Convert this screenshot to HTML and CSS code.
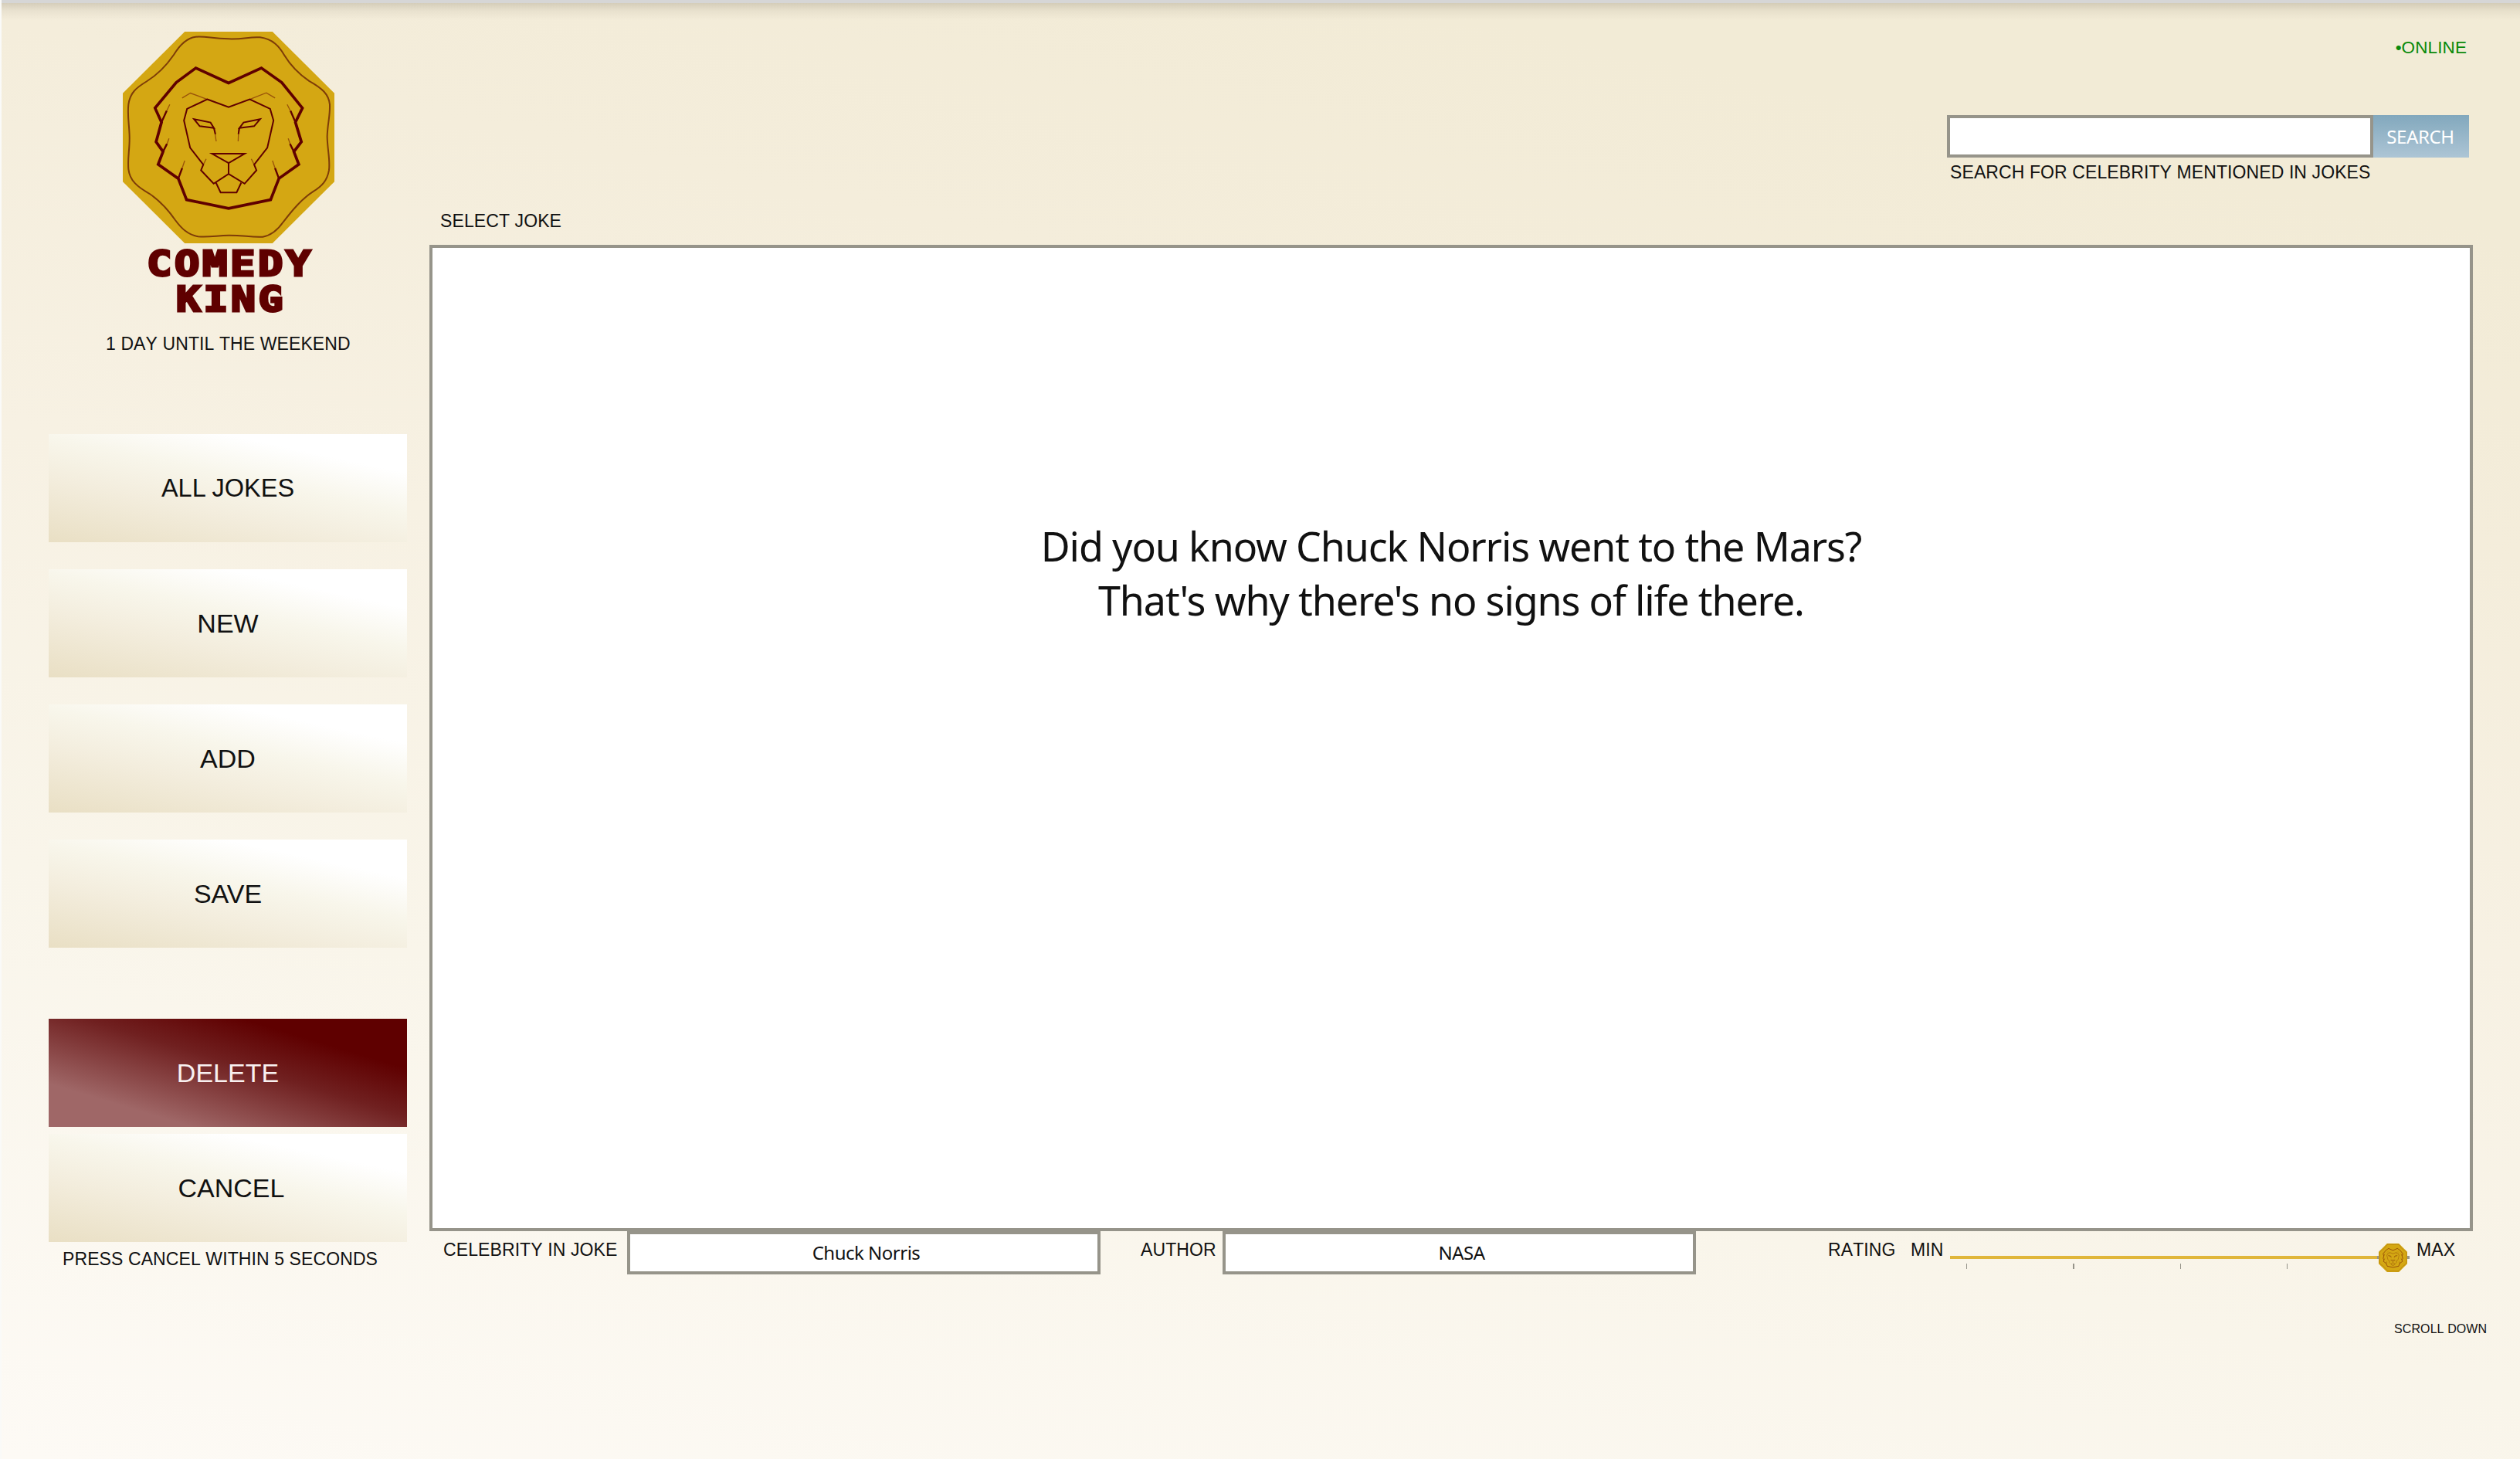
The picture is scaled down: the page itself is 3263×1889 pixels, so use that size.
FILE: index.html
```html
<!DOCTYPE html>
<html lang="en">
<head>
<meta charset="utf-8">
<title>Comedy King</title>
<link rel="stylesheet" href="styles.css">
</head>
<body>
<svg class="defs" aria-hidden="true">
  <symbol id="lion" viewBox="58 63 820 820">
    <path fill="#d4a713" d="M298 63H638L878 302V644L638 883H298L58 644V302Z"/>
    <g fill="none" stroke="#5f0000">
      <path stroke="#7d3c08" stroke-width="6" d="M468 91C530 93 545 82 590 85C640 92 664 120 684 154C712 200 745 230 780 254C830 282 856 305 860 345C862 390 851 420 850 470C851 520 862 560 857 600C850 640 830 662 795 683C750 712 715 755 680 800C658 832 635 852 600 858C550 860 530 852 470 852C420 853 400 860 350 857C310 850 285 825 262 794C235 755 205 720 160 690C115 665 85 640 80 596C76 550 85 520 84 470C83 420 75 390 80 345C86 300 110 280 150 256C195 228 230 190 256 152C280 112 305 88 340 83C385 80 400 90 468 91Z"/>
      <g stroke-width="11">
        <path d="M468 262L341 204L265 260L183 359L208 414L187 490L214 528L195 577L273 632L305 714L468 748L631 714L663 632L740 577L721 528L750 490L727 414L754 359L674 260L595 204Z"/>
      </g>
      <g stroke-width="7">
        <path d="M208 414L228 370M214 528L229 498M273 632L288 592M727 414L708 370M721 528L706 498M663 632L648 592"/>
      </g>
      <g stroke-width="4" opacity=".5">
        <path d="M226 375L240 345M228 502L237 477M287 595L298 563M710 375L695 345M708 502L699 477M649 595L638 563"/>
        <path d="M385 325L320 301L288 320M550 325L614 300L648 320M413 440L420 488M507 440L505 488M370 578L381 556M567 578L556 556"/>
      </g>
      <g stroke-width="6">
        <path d="M385 325L468 355L550 325L629 362L642 407L618 513L567 578L576 600L530 652L468 614L410 652L361 600L370 578L319 513L295 407L307 362Z"/>
        <path d="M404 536H530L468 572ZM468 572V614M419 648L437 686H499L517 648"/>
        <path d="M334 402L398 415L411 436L356 429ZM590 402L526 415L510 436L567 429Z"/>
        <path d="M411 436L417 460M510 436L506 460"/>
      </g>
    </g>
  </symbol>
</svg>
<div class="page">
  <aside class="sidebar">
    <svg class="emblem"><use href="#lion"/></svg>
    <svg class="wordmark" viewBox="0 0 216 92">
      <text x="0" y="42" textLength="216" lengthAdjust="spacingAndGlyphs">COMEDY</text>
      <text x="38" y="87.5" textLength="142" lengthAdjust="spacingAndGlyphs">KING</text>
    </svg>
    <p class="countdown">1 DAY UNTIL THE WEEKEND</p>
    <nav class="menu">
      <button class="btn btn-all">ALL JOKES</button>
      <button class="btn">NEW</button>
      <button class="btn">ADD</button>
      <button class="btn">SAVE</button>
    </nav>
    <div class="danger">
      <button class="btn btn-delete">DELETE</button>
      <button class="btn btn-cancel">CANCEL</button>
    </div>
    <p class="hint">PRESS CANCEL WITHIN 5 SECONDS</p>
  </aside>
  <main class="main">
    <header class="top">
      <p class="status">•ONLINE</p>
      <div class="search">
        <div class="search-row">
          <div class="field search-field"></div>
          <button class="search-btn">SEARCH</button>
        </div>
        <p class="search-label">SEARCH FOR CELEBRITY MENTIONED IN JOKES</p>
      </div>
    </header>
    <p class="select">SELECT JOKE</p>
    <section class="joke">
      <p class="line">Did you know Chuck Norris went to the Mars?</p>
      <p class="line">That's why there's no signs of life there.</p>
    </section>
    <footer class="details">
      <span class="lbl lbl-celebrity">CELEBRITY IN JOKE</span>
      <div class="field value">Chuck Norris</div>
      <span class="lbl lbl-author">AUTHOR</span>
      <div class="field value">NASA</div>
      <span class="lbl lbl-rating">RATING</span>
      <span class="lbl lbl-min">MIN</span>
      <div class="slider">
        <div class="track"></div>
        <div class="ticks"><i></i><i></i><i></i><i></i></div>
        <svg class="thumb"><use href="#lion"/></svg>
      </div>
      <span class="lbl lbl-max">MAX</span>
    </footer>
    <p class="scroll">SCROLL DOWN</p>
  </main>
</div>
</body>
</html>
```
FILE: styles.css
```css
* { box-sizing: border-box; }
body, p { margin: 0; }
body {
  font-family: "Liberation Sans", Arial, sans-serif;
  font-size: 23px;
  line-height: 26px;
  letter-spacing: .1px;
  font-kerning: none;
  color: #111;
}
.defs { display: block; width: 0; height: 0; }
.page {
  display: flex;
  width: 3263px;
  height: 1889px;
  overflow: hidden;
  border-left: 2px solid #fafaf8;
  background:
    linear-gradient(#d6d6d6 0 4px, rgba(90, 80, 60, .2) 4px, rgba(90, 80, 60, .07) 14px, rgba(90, 80, 60, 0) 26px) top / 100% 26px no-repeat,
    linear-gradient(12deg, #fdfaf5 0%, #f9f5ea 30%, #f7f1e3 52%, #f4eddb 72%, #f2ebd6 88%);
}
p, .lbl, button { white-space: nowrap; }

.sidebar {
  width: 554px;
  padding: 41px 0 0 61px;
  display: flex;
  flex-direction: column;
}
.emblem { width: 274px; height: 274px; margin-left: 96px; }
.wordmark { width: 216px; height: 92px; margin-left: 127px; overflow: visible; }
.wordmark text {
  font: bold 45px "DejaVu Sans Mono", monospace;
  letter-spacing: 3px;
  fill: #5f0000;
  stroke: #5f0000;
  stroke-width: 3px;
}
.countdown { margin: 25px 0 0 74px; }
.menu { margin-top: 104px; display: grid; gap: 35px; }
.btn {
  width: 464px;
  height: 140px;
  padding: 0;
  border: 0;
  font: 34px/38px "Liberation Sans", Arial, sans-serif;
  color: #111;
  background: linear-gradient(12deg, #e9dfc4 0%, #f3eddd 35%, #f8f6eb 57%, #fff 79%);
}
.btn-all { font-size: 32.5px; }
.danger { margin-top: 92px; display: grid; gap: 9px; }
.btn-delete { color: #f8f0f0; background: linear-gradient(to top right, #9f6767 20%, #702020 55%, #5f0000 77%); }
.btn-cancel { padding-left: 9px; }
.hint { margin: 9px 0 0 18px; }

.main { width: 2646px; display: flex; flex-direction: column; }
.top {
  height: 236px;
  padding-top: 49px;
  display: flex;
  flex-direction: column;
  align-items: flex-end;
}
.status { margin-right: 8px; color: #0a8a0a; font-size: 22.5px; }
.search { width: 676px; margin: 74px 5px 0 0; }
.search-row { display: flex; height: 55px; }
.field { border: 4px solid #96948a; background: #fff; }
.search-field { width: 552px; }
.search-btn {
  width: 124px;
  padding: 0 2px 0 0;
  border: 0;
  color: #fff;
  font: 24px "Noto Sans", sans-serif;
  letter-spacing: -.4px;
  background: linear-gradient(#82a8bd, #adc5d5);
}
.search-label { margin: 6px 0 0 4px; }
.select { margin: 37px 0 0 14px; }
.joke {
  width: 2646px;
  height: 1277px;
  margin-top: 18px;
  padding-top: 351px;
  border: 4px solid #96948a;
  background: #fff;
  text-align: center;
}
.line { font: 52px/70px "Noto Sans", sans-serif; letter-spacing: -1.15px; }

.details { display: flex; height: 56px; padding-left: 18px; }
.details .lbl { padding-top: 11px; }
.lbl-celebrity { width: 238px; }
.value {
  width: 613px;
  font: 24px/44px "Noto Sans", sans-serif;
  letter-spacing: -.5px;
  padding: 2px 0 0 6px;
  text-align: center;
}
.lbl-author { width: 158px; padding-left: 52px; }
.lbl-rating { width: 278px; padding-left: 171px; }
.lbl-min { width: 51px; }
.slider { position: relative; width: 595px; padding-top: 32px; }
.track {
  height: 4px;
  background: linear-gradient(90deg, #e0b63a 0 93%, #96948a 93%);
}
.ticks { display: flex; gap: 137px; padding: 6px 0 0 21px; }
.ticks i { width: 1.3px; height: 7px; background: #96948a; }
.thumb { position: absolute; left: 555px; top: 16px; width: 37px; height: 37px; }
.lbl-max { padding-left: 9px; }
.scroll { margin: 58px 0 0 2544px; font-size: 16px; }
```
